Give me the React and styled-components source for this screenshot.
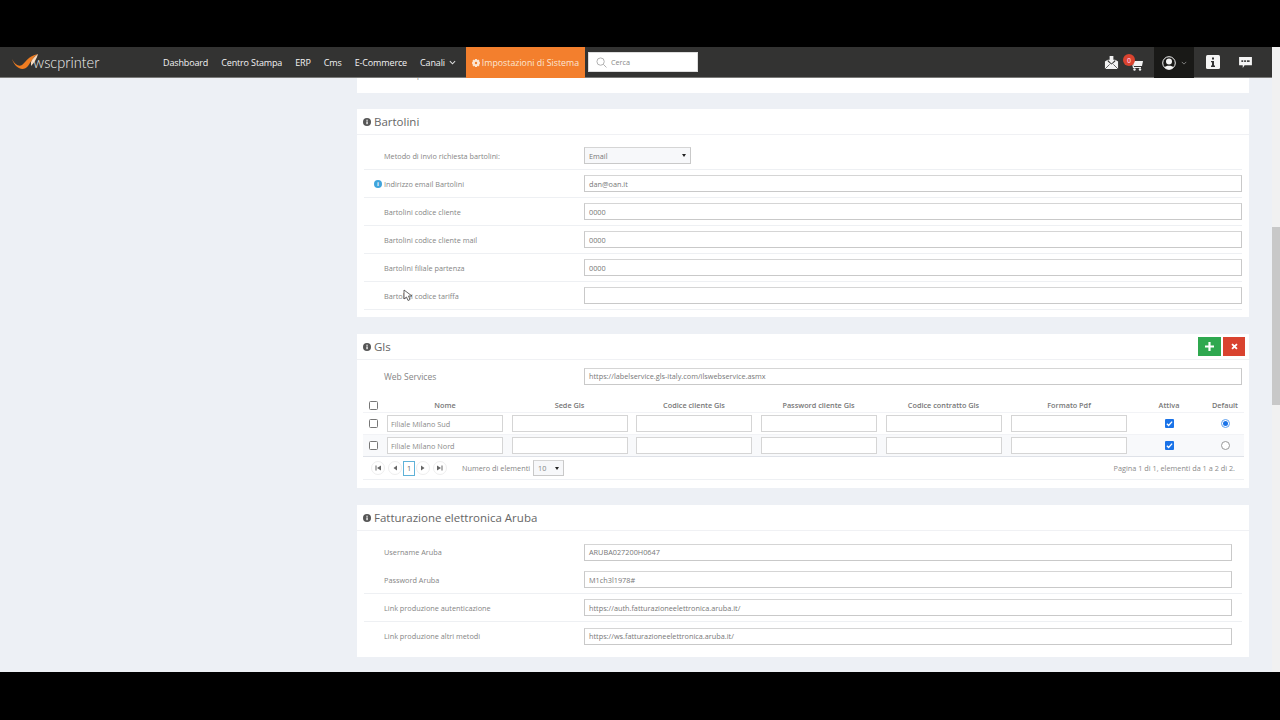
import React from "react";
import styled, { createGlobalStyle } from "styled-components";

const Global = createGlobalStyle`
  html, body { margin: 0; padding: 0; background: #000; overflow: hidden; }
  * { box-sizing: border-box; }
  body { font-family: "Open Sans", "Liberation Sans", sans-serif; }
`;
const Frame = styled.div`
  width: 1280px; height: 720px; display: flex; flex-direction: column; background: #000;
  padding: 47px 0 48px;
`;
const Viewport = styled.div`flex: 1; min-height: 0; display: flex; background: #edf0f5;`;
const Main = styled.div`flex: 1; min-width: 0; display: flex; flex-direction: column;`;
const Track = styled.div`width: 8px; background: #f1f1f1; padding-top: 180px;`;
const Thumb = styled.div`height: 178px; background: #c8c8c8;`;

const Header = styled.header`
  height: 31px; flex: none; display: flex; align-items: stretch; position: relative; z-index: 2;
  background: #333332; border-bottom: 1px solid #7a7a78; color: #f2f2f2; font-size: 9px;
`;
const Logo = styled.div`width: 163px; flex: none; display: flex; align-items: center; padding-left: 12px;`;
const LogoWord = styled.span`
  font-family: "Lato", sans-serif; font-weight: 300; font-size: 14.6px; color: #f0f0f0;
  margin-left: -5px;
`;
const Nav = styled.nav`display: flex; align-items: center; gap: 13px;`;
const NavItem = styled.a`display: flex; align-items: center; gap: 4px; color: #f2f2f2; white-space: nowrap; letter-spacing: -0.14px;`;
const Active = styled.a`
  margin-left: 10px; width: 119px; background: #f37f2d; display: flex; align-items: center; justify-content: center; gap: 2px;
  color: #fbe6d4; white-space: nowrap; font-size: 8.8px; margin-bottom: -1px;
`;
const Search = styled.div`
  margin: 5px 0 0 3px; width: 110px; height: 20px; background: #fff; display: flex; align-items: center; gap: 4px;
  padding-left: 7px; color: #888; font-size: 7.3px; border: 1px solid #ddd;
`;
const Tools = styled.div`margin-left: auto; display: flex; align-items: stretch;`;
const ToolIcon = styled.div`display: flex; align-items: center; justify-content: center; position: relative; width: ${p => p.$w}px;`;
const CartBox = styled(ToolIcon)`padding-top: 5px;`;
const UserBox = styled(ToolIcon)`background: #191917; gap: 5px; margin: 0 3px -1px 6px;`;
const Badge = styled.span`
  position: absolute; left: -3px; top: 7px; width: 12px; height: 12px; border-radius: 50%; background: #d9432f; color: #fbd; font-size: 7px;
  display: flex; align-items: center; justify-content: center; font-weight: 600;
`;

const Content = styled.div`flex: 1; min-height: 0; overflow: hidden; padding-left: 357px; width: 892px; box-sizing: content-box;`;
const Slice = styled.section`
  background: #fff; padding-left: 27px; display: flex; align-items: flex-start; padding-right: 7px;
  line-height: 8px; margin: -7px 0 16px; height: 22px;
`;
const SliceValue = styled.span`padding-left: 4px; font-size: 7.3px; color: #8a8a8a;`;
const Card = styled.section`background: #fff; margin-bottom: 17px; padding-bottom: ${p => p.$pb}px;`;
const CardHead = styled.div`
  height: 26px; display: flex; align-items: center; gap: 3px; padding: 0 4px 0 6px; border-bottom: 1px solid #f0f1f4;
`;
const CardTitle = styled.h2`margin: 0; font-weight: 400; font-size: 11.5px; color: #666; flex: 1;`;
const Rows = styled.div`padding: ${p => p.$pt}px 7px 0 7px;`;
const Row = styled.div`
  height: 28px; display: flex; align-items: center; position: relative; padding-left: 20px;
  border-bottom: ${p => (p.$plain ? "none" : "1px solid #eef0f3")};
  padding-right: ${p => p.$pr ?? 0}px;
`;
const Label = styled.label`width: 200px; flex: none; font-size: ${p => (p.$big ? 8.5 : 7.3)}px; color: #858585; white-space: nowrap;`;
const Input = styled.div`
  flex: 1; height: 17px; border: 1px solid #c9c9c9; border-top-color: #d5d5d5; background: #fff; font-size: 7.3px; color: #777;
  display: flex; align-items: center; padding-left: 4px; min-width: 0; white-space: nowrap;
`;
const Select = styled(Input)`flex: none; width: ${p => p.$w}px; justify-content: space-between; padding-right: 4px; background: #f7f8fa;`;
const Caret = styled.i`width: 0; height: 0; border: 2.5px solid transparent; border-top: 3px solid #222; border-bottom: 0;`;
const Hint = styled.span`
  position: absolute; left: 10px; top: 10px; width: 8px; height: 8px; border-radius: 50%; background: #3fa4dc; color: #fff;
  font-size: 6px; font-weight: 700; display: flex; align-items: center; justify-content: center;
`;
const BtnGroup = styled.div`display: flex; gap: 2px;`;
const Btn = styled.div`
  width: ${p => p.$w}px; height: 19px; background: ${p => p.$c}; color: #fff; display: flex; align-items: center; justify-content: center;
`;

const Table = styled.div`padding: 8px 5px 0 6px; font-size: 7.3px; color: #777;`;
const Grid = styled.div`
  display: grid; grid-template-columns: 20px 124px 125px 124px 125px 125px 126px 74px 38px; align-items: center;
  height: ${p => p.$h}px; background: ${p => p.$bg ?? "transparent"};
  border-bottom: 1px solid ${p => p.$line ?? "#f2f3f6"};
`;
const Th = styled.div`text-align: center; font-weight: 600; color: #777;`;
const Cell = styled.div`display: flex; justify-content: center; align-items: center;`;
const TInput = styled.div`
  width: 116px; height: 17px; border: 1px solid #d5d5d5; background: #fff; padding-left: 3px; display: flex; align-items: center; color: #8a8a8a;
  white-space: nowrap;
`;
const Check = styled.span`
  width: 9px; height: 9px; border: 1px solid #777; border-radius: 1.5px; background: #fff; display: block;
`;
const Checked = styled.span`
  width: 9px; height: 9px; border-radius: 1px; background: #1a73e8; display: flex; align-items: center; justify-content: center;
`;
const Radio = styled.span`
  width: 9px; height: 9px; border-radius: 50%; border: 1px solid ${p => (p.$on ? "#5c9ff0" : "#999")}; background: #fff; display: flex; align-items: center; justify-content: center;
  &::after { content: ""; width: 5px; height: 5px; border-radius: 50%; background: ${p => (p.$on ? "#1a73e8" : "transparent")}; }
`;
const Pager = styled.div`
  height: 23px; display: flex; align-items: center; gap: 3px; padding-left: 8px; border-bottom: 1px solid #eef0f3;
`;
const PageBtn = styled.span`
  width: 14px; height: 14px; flex: none; border-radius: 50%; border: 1px solid #eee; display: flex; align-items: center; justify-content: center;
`;
const PageCur = styled.span`
  width: 12px; height: 15px; margin: 0 -2px; border: 1px solid #5fb2d8; display: flex; align-items: center; justify-content: center; color: #666;
`;
const PagerLabel = styled.span`margin-left: 12px; color: #858585; white-space: nowrap;`;
const SmallSelect = styled(Select)`height: 16px; color: #858585;`;
const PagerInfo = styled.span`margin-left: auto; padding-right: 9px; color: #8a8a8a;`;
const Cursor = styled.svg`position: absolute; left: 39px; top: 7px;`;

const InfoIcon = () => (
  <svg width="8" height="8" viewBox="0 0 16 16"><circle cx="8" cy="8" r="8" fill="#555" /><rect x="6.800" y="6.800" width="2.600" height="5.600" fill="#fff" /><rect x="6.800" y="3.400" width="2.600" height="2.200" fill="#fff" /></svg>
);
const Swoosh = () => (
  <svg width="26" height="20" viewBox="0 0 26 20" style={{ flex: "none" }}>
    <path d="M0 7 C3 13 7 15 10 13 C13 11 16 4 26 2 C21 5 19 10 16 14 C12 19 4 18 0 7Z" fill="#ef7d22" />
    <path d="M19 10 C20 7 23 4 26 2 C25 6 22 11 19 14Z" fill="#f7d9bd" />
  </svg>
);
const SearchIcon = () => (
  <svg width="11" height="11" viewBox="0 0 12 12" fill="none" stroke="#aaa" strokeWidth="1"><circle cx="5" cy="5" r="4" /><path d="M8 8l3.400 3.400" /></svg>
);
const GearIcon = () => (
  <svg width="8" height="8" viewBox="0 0 16 16" fill="#fbe6d4"><path d="M6 0h4l.5 2.400 2-1.200 2.800 2.800-1.200 2 2 .5v3l-2 .5 1.200 2-2.800 2.800-2-1.200L10 16H6l-.5-2.400-2 1.200L.7 12l1.200-2L0 9.500v-3l2-.5L.7 4 3.500 1.200l2 1.200z" /><circle cx="8" cy="8" r="2.400" fill="#f37f2d" /></svg>
);
const Chevron = ({ c = "#ddd", s = 7 }) => (
  <svg width={s} height={s} viewBox="0 0 8 8" fill="none" stroke={c} strokeWidth="1.200"><path d="M1 2.500l3 3 3-3" /></svg>
);
const MailIcon = () => (
  <svg width="15" height="15" viewBox="0 0 16 16"><path d="M1 7l3-2v2l4 3 4-3V5l3 2v8H1z" fill="#f2f2f2" /><path d="M6 1h4v4h2l-4 4-4-4h2z" fill="#f2f2f2" /><path d="M1 15l5-5M15 15l-5-5" stroke="#333" strokeWidth=".8" /></svg>
);
const CartIcon = () => (
  <svg width="12" height="12" viewBox="0 0 12 12" fill="#f2f2f2"><path d="M2 2h10l-1 5H3z" /><path d="M0 .5h2L3 8h7v1H2z" /><circle cx="3.500" cy="10.500" r="1.200" /><circle cx="9" cy="10.500" r="1.200" /></svg>
);
const UserIcon = () => (
  <svg width="14" height="14" viewBox="0 0 14 14"><circle cx="7" cy="7" r="6.300" fill="none" stroke="#f2f2f2" strokeWidth="1" /><circle cx="7" cy="5.600" r="3" fill="#f2f2f2" /><path d="M2.500 11.500C3.500 9 10.500 9 11.500 11.500 9 14 5 14 2.500 11.500Z" fill="#f2f2f2" /></svg>
);
const BoxInfo = () => (
  <svg width="14" height="14" viewBox="0 0 14 14"><rect width="14" height="14" rx="1.500" fill="#f5f5f5" /><rect x="6" y="2.500" width="2" height="2" fill="#333" /><path d="M5 6h3v4.500h1V12H5v-1.500h1V7.300H5z" fill="#333" /></svg>
);
const ChatIcon = () => (
  <svg width="13" height="11" viewBox="0 0 14 12"><path d="M0 0h14v9H6l-2 3V9H0z" fill="#f5f5f5" /><path d="M2.500 3.500h2v2h-2zM5.500 3.500h2v2h-2zM8.500 3.500h3v2h-3z" fill="#444" /></svg>
);
const Plus = () => (<svg width="9" height="9" viewBox="0 0 10 10"><path d="M3.800 0h2.400v3.800H10v2.400H6.200V10H3.800V6.200H0V3.800h3.800z" fill="#fff" /></svg>);
const Cross = () => (<svg width="7" height="7" viewBox="0 0 10 10"><path d="M1.500 1.500l7 7M8.500 1.500l-7 7" stroke="#fff" strokeWidth="2.600" /></svg>);
const Tick = () => (<svg width="7" height="7" viewBox="0 0 8 8" fill="none" stroke="#fff" strokeWidth="1.500"><path d="M1 4.200l2 2L7 1.800" /></svg>);
const PageArrow = ({ d }) => (<svg width="6" height="6" viewBox="0 0 6 6" fill="#666"><path d={d} /></svg>);

const NAV = ["Dashboard", "Centro Stampa", "ERP", "Cms", "E-Commerce"];
const BART = [
  ["Bartolini codice cliente", "0000"],
  ["Bartolini codice cliente mail", "0000"],
  ["Bartolini filiale partenza", "0000"],
];
const ARUBA = [
  ["Username Aruba", "ARUBA027200H0647", true],
  ["Password Aruba", "M1ch3l1978#", false],
  ["Link produzione autenticazione", "https://auth.fatturazioneelettronica.aruba.it/", false],
  ["Link produzione altri metodi", "https://ws.fatturazioneelettronica.aruba.it/", true],
];
const COLS = ["Nome", "Sede Gls", "Codice cliente Gls", "Password cliente Gls", "Codice contratto Gls", "Formato Pdf", "Attiva", "Default"];

const GlsRow = ({ name, bg, on, line }) => (
  <Grid $h={22} $bg={bg} $line={line}>
    <Cell><Check /></Cell>
    <Cell><TInput>{name}</TInput></Cell>
    {[0, 1, 2, 3, 4].map(i => <Cell key={i}><TInput /></Cell>)}
    <Cell><Checked><Tick /></Checked></Cell>
    <Cell><Radio $on={on} /></Cell>
  </Grid>
);

export default function App() {
  return (
    <Frame>
      <Global />
      <Viewport>
        <Main>
          <Header>
            <Logo><Swoosh /><LogoWord>wscprinter</LogoWord></Logo>
            <Nav>
              {NAV.map(n => <NavItem key={n}>{n}</NavItem>)}
              <NavItem>Canali <Chevron /></NavItem>
            </Nav>
            <Active><GearIcon /> Impostazioni di Sistema</Active>
            <Search><SearchIcon /> Cerca</Search>
            <Tools>
              <ToolIcon $w={30}><MailIcon /></ToolIcon>
              <CartBox $w={22}><Badge>0</Badge><CartIcon /></CartBox>
              <UserBox $w={40}><UserIcon /><Chevron c="#888" s={6} /></UserBox>
              <ToolIcon $w={32}><BoxInfo /></ToolIcon>
              <ToolIcon $w={32}><ChatIcon /></ToolIcon>
              <ToolIcon $w={11} />
            </Tools>
          </Header>
          <Content>
            <Slice><Label>Costo di spedizione standard Bartolini</Label><SliceValue>0000000000000</SliceValue></Slice>

            <Card $pb={7}>
              <CardHead><InfoIcon /><CardTitle>Bartolini</CardTitle></CardHead>
              <Rows $pt={7}>
                <Row>
                  <Label>Metodo di invio richiesta bartolini:</Label>
                  <Select $w={107}>Email<Caret /></Select>
                </Row>
                <Row><Hint>i</Hint><Label>Indirizzo email Bartolini</Label><Input>dan@oan.it</Input></Row>
                {BART.map(([l, v]) => <Row key={l}><Label>{l}</Label><Input>{v}</Input></Row>)}
                <Row>
                  <Label>Bartolini codice tariffa</Label><Input />
                  <Cursor width="10" height="14" viewBox="0 0 10 14"><path d="M1 1v9l2.500-2 1.500 3.500 2-1L5.500 7H9z" fill="#fff" stroke="#444" strokeWidth=".8" /></Cursor>
                </Row>
              </Rows>
            </Card>

            <Card $pb={8}>
              <CardHead>
                <InfoIcon /><CardTitle>Gls</CardTitle>
                <BtnGroup><Btn $w={23} $c="#2fa84f"><Plus /></Btn><Btn $w={22} $c="#d9432f"><Cross /></Btn></BtnGroup>
              </CardHead>
              <Rows $pt={2}>
                <Row $plain><Label $big>Web Services</Label><Input>https://labelservice.gls-italy.com/ilswebservice.asmx</Input></Row>
              </Rows>
              <Table>
                <Grid $h={15}>
                  <Cell><Check /></Cell>
                  {COLS.map(c => <Th key={c}>{c}</Th>)}
                </Grid>
                <GlsRow name="Filiale Milano Sud" on />
                <GlsRow name="Filiale Milano Nord" bg="#f8f9fb" line="#dfe2e8" />
                <Pager>
                  <PageBtn><PageArrow d="M0.500 0.500h1v5h-1zM6 0.500v5L2 3z" /></PageBtn>
                  <PageBtn><PageArrow d="M5 0.500v5L1.500 3z" /></PageBtn>
                  <PageCur>1</PageCur>
                  <PageBtn><PageArrow d="M1 0.500v5L4.500 3z" /></PageBtn>
                  <PageBtn><PageArrow d="M0 0.500v5L4 3zM4.500 0.500h1v5h-1z" /></PageBtn>
                  <PagerLabel>Numero di elementi</PagerLabel>
                  <SmallSelect $w={31}>10<Caret /></SmallSelect>
                  <PagerInfo>Pagina 1 di 1, elementi da 1 a 2 di 2.</PagerInfo>
                </Pager>
              </Table>
            </Card>

            <Card $pb={7}>
              <CardHead><InfoIcon /><CardTitle>Fatturazione elettronica Aruba</CardTitle></CardHead>
              <Rows $pt={7}>
                {ARUBA.map(([l, v, plain]) => <Row key={l} $pr={10} $plain={plain}><Label>{l}</Label><Input>{v}</Input></Row>)}
              </Rows>
            </Card>
          </Content>
        </Main>
        <Track><Thumb /></Track>
      </Viewport>
    </Frame>
  );
}
